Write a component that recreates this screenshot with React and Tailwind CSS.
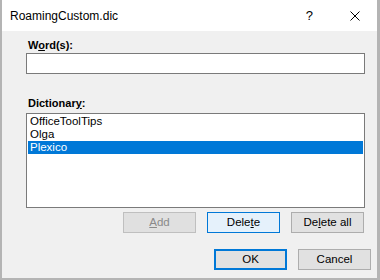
const Btn = ({ children, variant = 'normal' }) => {
    const styles = {
        normal: 'bg-[#e1e1e1] border border-[#adadad] text-black',
        hover: 'bg-[#e5f1fb] border border-[#0078d7] text-black',
        primary: 'bg-[#e1e1e1] border-2 border-[#0078d7] text-black',
        disabled: 'bg-[#e0e0e0] border border-[#bfbfbf] text-[#8a8a8a]',
    };
    return (
        <div className={`w-[73px] h-[21px] flex items-center justify-center text-[11.5px] leading-none ${styles[variant]}`}>
            {children}
        </div>
    );
};

const items = ['OfficeToolTips', 'Olga', 'Plexico'];

export default function App() {
    return (
        <div className="w-[380px] h-[280px] flex flex-col bg-[#f0f0f0] border-l-2 border-r-[3px] border-b-2 border-[#b4b4b4] font-['Liberation_Sans',Arial,sans-serif] text-black">
            {/* title bar */}
            <div className="h-[31px] shrink-0 bg-white flex items-center pl-[8px]">
                <span className="flex-1 text-[12px]">RoamingCustom.dic</span>
                <span className="text-[13px] mr-[37px]">?</span>
                <svg width="10" height="10" viewBox="0 0 10 10" className="mr-[17px]">
                    <path d="M0.5 0.5 L9.5 9.5 M9.5 0.5 L0.5 9.5" stroke="#000" strokeWidth="1" />
                </svg>
            </div>

            {/* body */}
            <div className="flex-1 flex flex-col pl-[24px] pr-[6px] pt-[7px]">
                <div className="mr-[6px] flex flex-col">
                    <label className="h-[15px] leading-[15px] pl-[2px] text-[11px] font-bold">
                        W<span className="underline">o</span>rd(s):
                    </label>
                    <div className="h-[21px] bg-white border border-[#7a7a7a]" />

                    <label className="mt-[22px] h-[17px] leading-[15px] pl-[2px] text-[11px] font-bold">
                        Dictionar<span className="underline">y</span>:
                    </label>
                    <div className="h-[95px] bg-white border border-[#7a7a7a] p-[1px] flex flex-col">
                        {items.map((it) => (
                            <div
                                key={it}
                                className={`h-[13px] leading-[13px] pl-[2px] text-[11.5px] ${it === 'Plexico' ? 'bg-[#0078d7] text-white' : ''}`}
                            >
                                {it}
                            </div>
                        ))}
                    </div>

                    <div className="mt-[4px] flex justify-end gap-[11px] mr-[1px]">
                        <Btn variant="disabled"><span className="underline">A</span>dd</Btn>
                        <Btn variant="hover">Dele<span className="underline">t</span>e</Btn>
                        <Btn>De<span className="underline">l</span>ete all</Btn>
                    </div>
                </div>

                <div className="mt-[16px] flex justify-end gap-[11px]">
                    <Btn variant="primary">OK</Btn>
                    <Btn>Cancel</Btn>
                </div>
            </div>
        </div>
    );
}
